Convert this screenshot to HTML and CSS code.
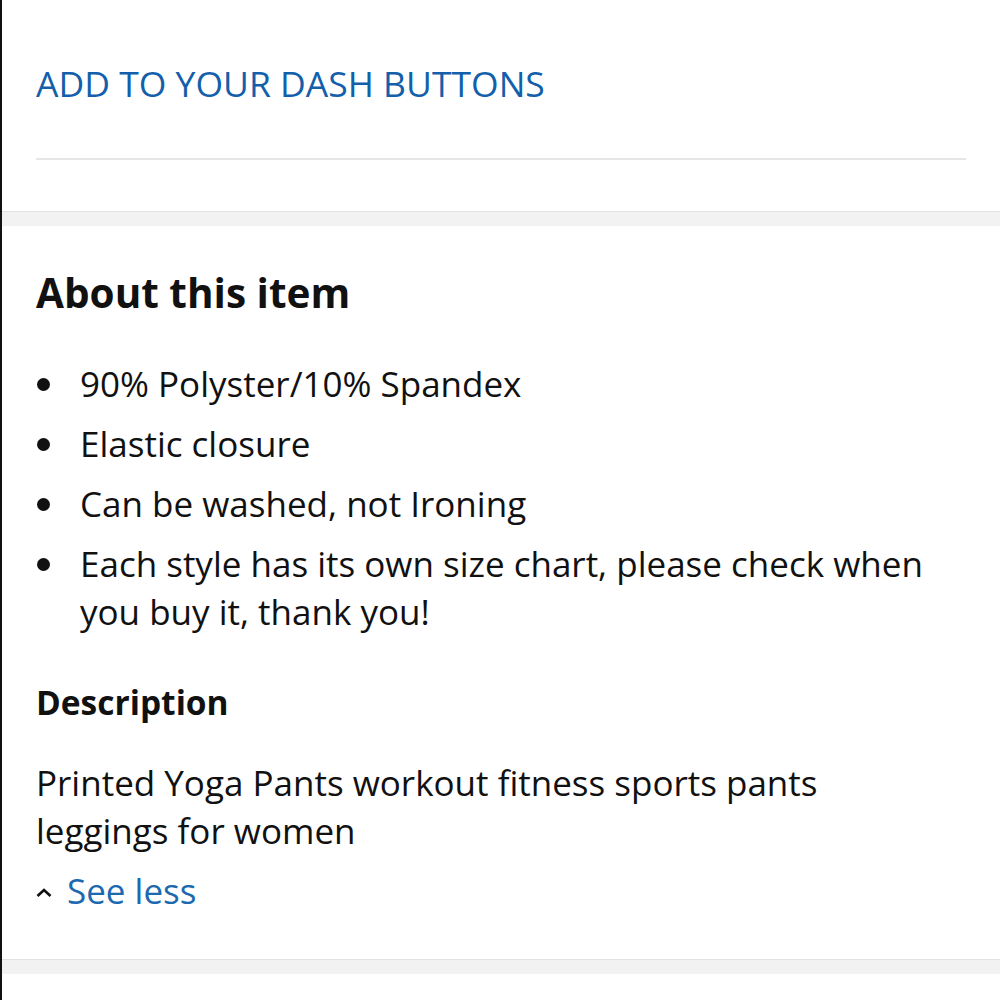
FILE: index.html
```html
<!DOCTYPE html>
<html>
<head>
<meta charset="utf-8">
<link rel="stylesheet" href="styles.css">
</head>
<body>
<div class="page">
  <section class="dash">
    <a class="dash-link">ADD TO YOUR DASH BUTTONS</a>
    <div class="divider"></div>
  </section>
  <div class="band"></div>
  <section class="about">
    <h2 class="about-title">About this item</h2>
    <ul class="bullets">
      <li>90% Polyster/10% Spandex</li>
      <li>Elastic closure</li>
      <li>Can be washed, not Ironing</li>
      <li>Each style has its own size chart, please check when you buy it, thank you!</li>
    </ul>
    <h3 class="desc-title">Description</h3>
    <p class="desc">Printed Yoga Pants workout fitness sports pants leggings for women</p>
    <a class="see-less"><svg class="chev" width="16" height="9" viewBox="0 0 16 9"><path d="M1.5 8 L8 2 L14.5 8" fill="none" stroke="#111" stroke-width="2.6"/></svg><span>See less</span></a>
  </section>
  <div class="band"></div>
</div>
</body>
</html>
```

FILE: styles.css
```css
html, body {
  margin: 0;
  padding: 0;
  background: #fff;
}
body {
  font-family: "Open Sans", "Noto Sans", sans-serif;
  color: #111;
}
.page {
  border-left: 2px solid #111;
  min-height: 1000px;
  box-sizing: border-box;
}
.dash {
  height: 211px;
  padding: 0 34px 0 34px;
  box-sizing: border-box;
  display: flex;
  flex-direction: column;
}
.dash-link {
  color: #135fab;
  font-size: 35.5px;
  line-height: 40px;
  margin-top: 63px;
  display: block;
}
.divider {
  height: 2px;
  background: #e6e6e6;
  margin-top: 55px;
}
.band {
  height: 15px;
  background: #f2f2f2;
  border-top: 1px solid #e2e2e2;
  box-sizing: border-box;
}
.about {
  padding: 0 34px;
  height: 733px;
  box-sizing: border-box;
  padding-top: 39px;
}
.about-title {
  margin: 0;
  font-size: 40.5px;
  font-weight: 700;
  line-height: 56px;
}
.bullets {
  list-style: none;
  margin: 39px 0 0 0;
  padding: 0;
}
.bullets li {
  position: relative;
  padding-left: 44px;
  font-size: 35px;
  line-height: 48px;
  margin-bottom: 12px;
}
.bullets li::before {
  content: "";
  position: absolute;
  left: 1px;
  top: 18px;
  width: 13px;
  height: 13px;
  border-radius: 50%;
  background: #111;
}
.desc-title {
  margin: 42px 0 0 0;
  font-size: 33.5px;
  font-weight: 700;
  line-height: 48px;
}
.desc {
  margin: 33px 0 0 0;
  font-size: 35px;
  line-height: 48px;
  padding-right: 100px;
}
.see-less {
  display: flex;
  align-items: center;
  gap: 15px;
  margin-top: 12px;
  font-size: 35px;
  line-height: 48px;
  color: #1c69b0;
}
.chev {
  display: block;
  margin-top: 2px;
}
```
